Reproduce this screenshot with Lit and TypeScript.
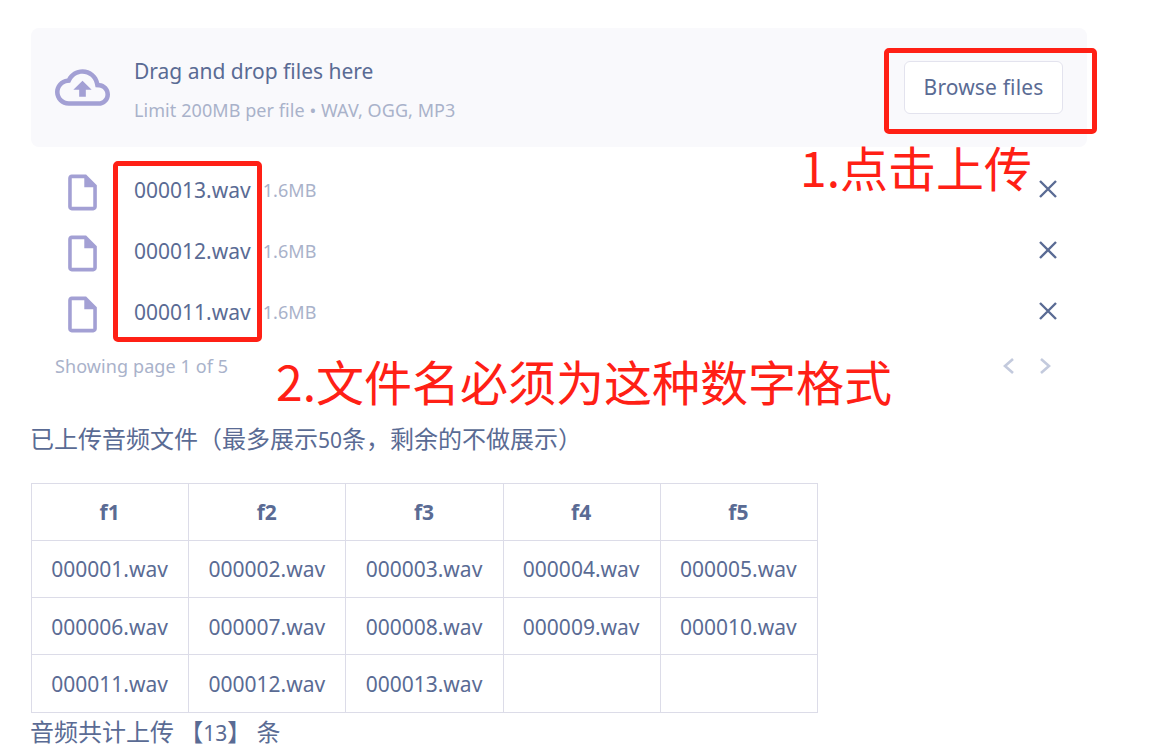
import { LitElement, html, css, svg } from "lit";
import { customElement } from "lit/decorators.js";

const CLOUD = svg`<path d="M19.35 10.04C18.67 6.59 15.64 4 12 4 9.11 4 6.6 5.64 5.35 8.04 2.34 8.36 0 10.91 0 14c0 3.31 2.69 6 6 6h13c2.76 0 5-2.24 5-5 0-2.64-2.05-4.78-4.65-4.96zM19 18H6c-2.21 0-4-1.79-4-4 0-2.05 1.53-3.76 3.56-3.97l1.07-.11.5-.95C8.08 7.14 9.94 6 12 6c2.62 0 4.88 1.86 5.39 4.43l.3 1.5 1.53.11c1.56.1 2.78 1.41 2.78 2.96 0 1.65-1.35 3-3 3zM8 13h2.55v3h2.9v-3H16l-4-4z"/>`;
const FILE = svg`<path fill-rule="evenodd" d="M14 2H6c-1.1 0-1.99.9-1.99 2L4 20c0 1.1.89 2 1.99 2H18c1.1 0 2-.9 2-2V8l-6-6zM6 20V4h7v5h5v11H6z"/>`;

const FILES = ["000013.wav", "000012.wav", "000011.wav"];
const HEAD = ["f1", "f2", "f3", "f4", "f5"];
const BODY = [
  ["000001.wav", "000002.wav", "000003.wav", "000004.wav", "000005.wav"],
  ["000006.wav", "000007.wav", "000008.wav", "000009.wav", "000010.wav"],
  ["000011.wav", "000012.wav", "000013.wav", "", ""],
];

@customElement("app-root")
export class AppRoot extends LitElement {
  static styles = css`
    :host {
      display: block;
      position: relative;
      width: 1149px;
      height: 756px;
      overflow: hidden;
      background: #fff;
      color: #5a6b94;
      font-family: "Noto Sans", "Noto Sans CJK SC", sans-serif;
    }
    .page {
      display: flex;
      flex-direction: column;
      width: 1056px;
      padding: 28px 0 0 31px;
    }
    .drop {
      display: flex;
      align-items: center;
      height: 119px;
      padding: 0 24px;
      border-radius: 8px;
      background: #f9f9fc;
    }
    .cloud {
      width: 55px;
      height: 55px;
      fill: #a3a0d4;
      flex: none;
    }
    .drop-text {
      display: flex;
      flex-direction: column;
      gap: 10px;
      margin: 6px 0 0 24px;
      flex: 1;
    }
    .drop-title {
      font-size: 21px;
      line-height: 29px;
    }
    .limit {
      font-size: 18px;
      line-height: 29px;
      color: #a9b2ca;
      letter-spacing: 0.07px;
    }
    .browse {
      box-sizing: border-box;
      width: 159px;
      height: 53px;
      border: 1px solid #e3e3ee;
      border-radius: 6px;
      background: #fff;
      color: inherit;
      font: inherit;
      font-size: 21px;
      letter-spacing: 0.15px;
      padding: 0 0 2px;
    }
    .files {
      margin-top: 12.5px;
      display: flex;
      flex-direction: column;
    }
    .file {
      display: flex;
      align-items: center;
      height: 61px;
      padding-left: 30px;
    }
    .file-icon {
      width: 43px;
      height: 43px;
      margin-top: 5px;
      fill: #a3a0d4;
      flex: none;
    }
    .file-name {
      margin-left: 30px;
      font-size: 21px;
    }
    .file-size {
      margin-left: 12px;
      font-size: 18px;
      color: #a9b2ca;
      flex: 1;
      letter-spacing: 0.1px;
    }
    .close {
      width: 20px;
      height: 20px;
      margin: 0 29px 2px 0;
      stroke: #5a6b94;
      stroke-width: 2.4;
      fill: none;
      flex: none;
    }
    .pager {
      display: flex;
      align-items: center;
      height: 46px;
      padding-left: 24px;
      font-size: 18px;
      color: #a9b2ca;
      letter-spacing: 0.1px;
    }
    .pager span {
      flex: 1;
    }
    .chev {
      width: 14px;
      height: 20px;
      stroke: #c3cadd;
      stroke-width: 2.6;
      fill: none;
      flex: none;
    }
    .chev.next {
      margin: 0 35px 0 22px;
    }
    .note {
      margin: 33px 0 0 -1px;
      font-size: 24px;
      line-height: 34px;
      white-space: nowrap;
    }
    .num {
      font-size: 21px;
    }
    table {
      margin-top: 26px;
      border-collapse: collapse;
      table-layout: fixed;
      width: 787px;
      font-size: 21px;
    }
    th, td {
      border: 1px solid #dcdce8;
      height: 57.25px;
      padding: 1px 1px 0 0;
      text-align: center;
      box-sizing: border-box;
      font-weight: 400;
    }
    th {
      font-weight: 700;
    }
    .total {
      font-size: 24px;
      line-height: 34px;
      margin: 2px 0 0 -1px;
      white-space: pre;
      word-spacing: -1px;
    }
    .mark {
      position: absolute;
      box-sizing: border-box;
      border: 5px solid #ff2015;
      border-radius: 5px;
    }
    .mark.one {
      left: 884px;
      top: 48px;
      width: 213px;
      height: 86px;
    }
    .mark.two {
      left: 113px;
      top: 161px;
      width: 149px;
      height: 181px;
    }
    .label {
      position: absolute;
      color: #ff2015;
      font-family: "Noto Sans CJK SC", sans-serif;
      font-size: 48px;
      font-weight: 400;
      line-height: 60px;
      white-space: nowrap;
    }
    .label.one {
      left: 800px;
      top: 136px;
    }
    .label.two {
      left: 276px;
      top: 350px;
    }
  `;

  render() {
    return html`
      <div class="page">
        <div class="drop">
          <svg class="cloud" viewBox="0 0 24 24">${CLOUD}</svg>
          <div class="drop-text">
            <div class="drop-title">Drag and drop files here</div>
            <div class="limit">Limit 200MB per file • WAV, OGG, MP3</div>
          </div>
          <button class="browse">Browse files</button>
        </div>
        <div class="files">
          ${FILES.map(
            (f) => html`<div class="file">
              <svg class="file-icon" viewBox="0 0 24 24">${FILE}</svg>
              <div class="file-name">${f}</div>
              <div class="file-size">1.6MB</div>
              <svg class="close" viewBox="0 0 20 20"><path d="M2 2L18 18M18 2L2 18" /></svg>
            </div>`
          )}
        </div>
        <div class="pager">
          <span>Showing page 1 of 5</span>
          <svg class="chev" viewBox="0 0 14 20"><path d="M11 3L3 10L11 17" /></svg>
          <svg class="chev next" viewBox="0 0 14 20"><path d="M3 3L11 10L3 17" /></svg>
        </div>
        <div class="note">已上传音频文件（最多展示<span class="num">50</span>条，剩余的不做展示）</div>
        <table>
          <thead>
            <tr>${HEAD.map((h) => html`<th>${h}</th>`)}</tr>
          </thead>
          <tbody>
            ${BODY.map((r) => html`<tr>${r.map((c) => html`<td>${c}</td>`)}</tr>`)}
          </tbody>
        </table>
        <div class="total">音频共计上传 【<span class="num">13</span>】 条</div>
      </div>
      <div class="mark one"></div>
      <div class="mark two"></div>
      <div class="label one">1.点击上传</div>
      <div class="label two">2.文件名必须为这种数字格式</div>
    `;
  }
}
